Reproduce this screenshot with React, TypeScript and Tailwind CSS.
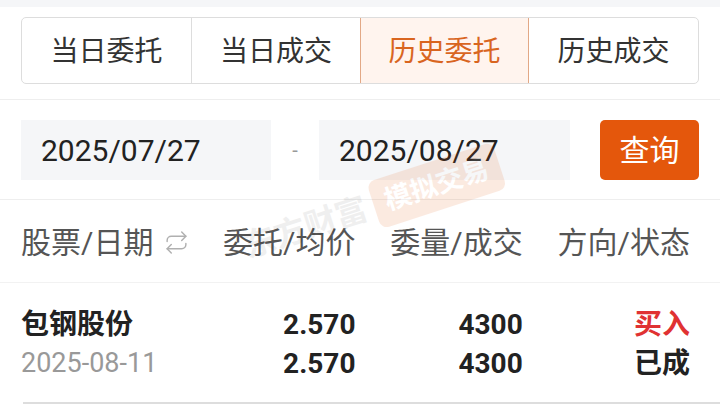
import React from 'react';
import { Repeat } from 'lucide-react';

const tabs = ['当日委托', '当日成交', '历史委托', '历史成交'];

const App: React.FC = () => {
  const active = 2;

  return (
    <div
      className="relative w-[720px] h-[419px] overflow-hidden bg-white"
      style={{ fontFamily: 'Roboto, "Noto Sans CJK SC", sans-serif' }}
    >
      <div className="h-[7px] bg-[#f5f6f8]" />

      {/* tabs */}
      <div className="px-[21px] pt-[10px] pb-[15px] border-b border-[#eeeeee]">
        <div className="grid grid-cols-4 h-[67px] rounded-[5px] border border-[#dddddd] overflow-hidden">
          {tabs.map((t, i) => (
            <div
              key={t}
              className={
                i === active
                  ? 'flex items-center justify-center pt-[3px] text-[28px] text-[#d9651f] bg-[#fff4ee] border border-[#e2a886] -my-px'
                  : i === active + 1 || i === 0
                  ? 'flex items-center justify-center pt-[3px] text-[28px] text-[#333333]'
                  : 'flex items-center justify-center pt-[3px] text-[28px] text-[#333333] border-l border-[#dddddd]'
              }
            >
              {t}
            </div>
          ))}
        </div>
      </div>

      {/* date range */}
      <div className="flex items-center px-[21px] pt-[20px] pb-[19px] border-b border-[#eeeeee]">
        <div className="w-[250px] h-[60px] bg-[#f5f6f8] flex items-center pl-[20px] text-[30px] text-[#222222]">
          2025/07/27
        </div>
        <div className="w-[48px] text-center text-[20px] text-[#999999]">-</div>
        <div className="w-[251px] h-[60px] bg-[#f5f6f8] flex items-center pl-[20px] text-[30px] text-[#222222]">
          2025/08/27
        </div>
        <div className="ml-auto w-[99px] h-[60px] rounded-[5px] bg-[#e4570c] flex items-center justify-center text-[30px] text-white">
          查询
        </div>
      </div>

      {/* header */}
      <div className="grid grid-cols-4 items-center h-[83px] pl-[21px] pr-[30px] pt-[2px] border-b border-[#f2f2f2] text-[30px] text-[#555555] whitespace-nowrap">
        <div className="flex items-center gap-[11px]">
          <span>股票/日期</span>
          <Repeat size={25} strokeWidth={1.4} className="shrink-0 text-[#b0b0b0]" />
        </div>
        <div className="text-right">委托/均价</div>
        <div className="text-right">委量/成交</div>
        <div className="text-right">方向/状态</div>
      </div>

      {/* row */}
      <div className="ml-[23px] pr-[30px] pt-[22px] pb-[19px] border-b-2 border-[#dddddd]">
        <div className="grid grid-cols-4 -ml-[2px] leading-[39px] text-[28px]">
          <div className="font-bold text-[#222222]">包钢股份</div>
          <div className="text-right font-bold text-[#222222]">2.570</div>
          <div className="text-right font-bold text-[#222222]">4300</div>
          <div className="text-right font-bold text-[#e03232]">买入</div>
          <div className="text-[27px] text-[#999999]">2025-08-11</div>
          <div className="text-right font-bold text-[#222222]">2.570</div>
          <div className="text-right font-bold text-[#222222]">4300</div>
          <div className="text-right font-bold text-[#222222]">已成</div>
        </div>
      </div>

      {/* watermark */}
      <div className="absolute left-[238px] top-[182px] flex items-center gap-[8px] -rotate-[18deg] pointer-events-none">
        <span className="text-[32px] font-bold text-[#000000] opacity-[0.06]">东方财富</span>
        <span className="px-[12px] py-[4px] rounded-[8px] bg-[#e4570c] opacity-[0.12] text-[27px] font-bold text-white">
          模拟交易
        </span>
      </div>
    </div>
  );
};

export default App;
